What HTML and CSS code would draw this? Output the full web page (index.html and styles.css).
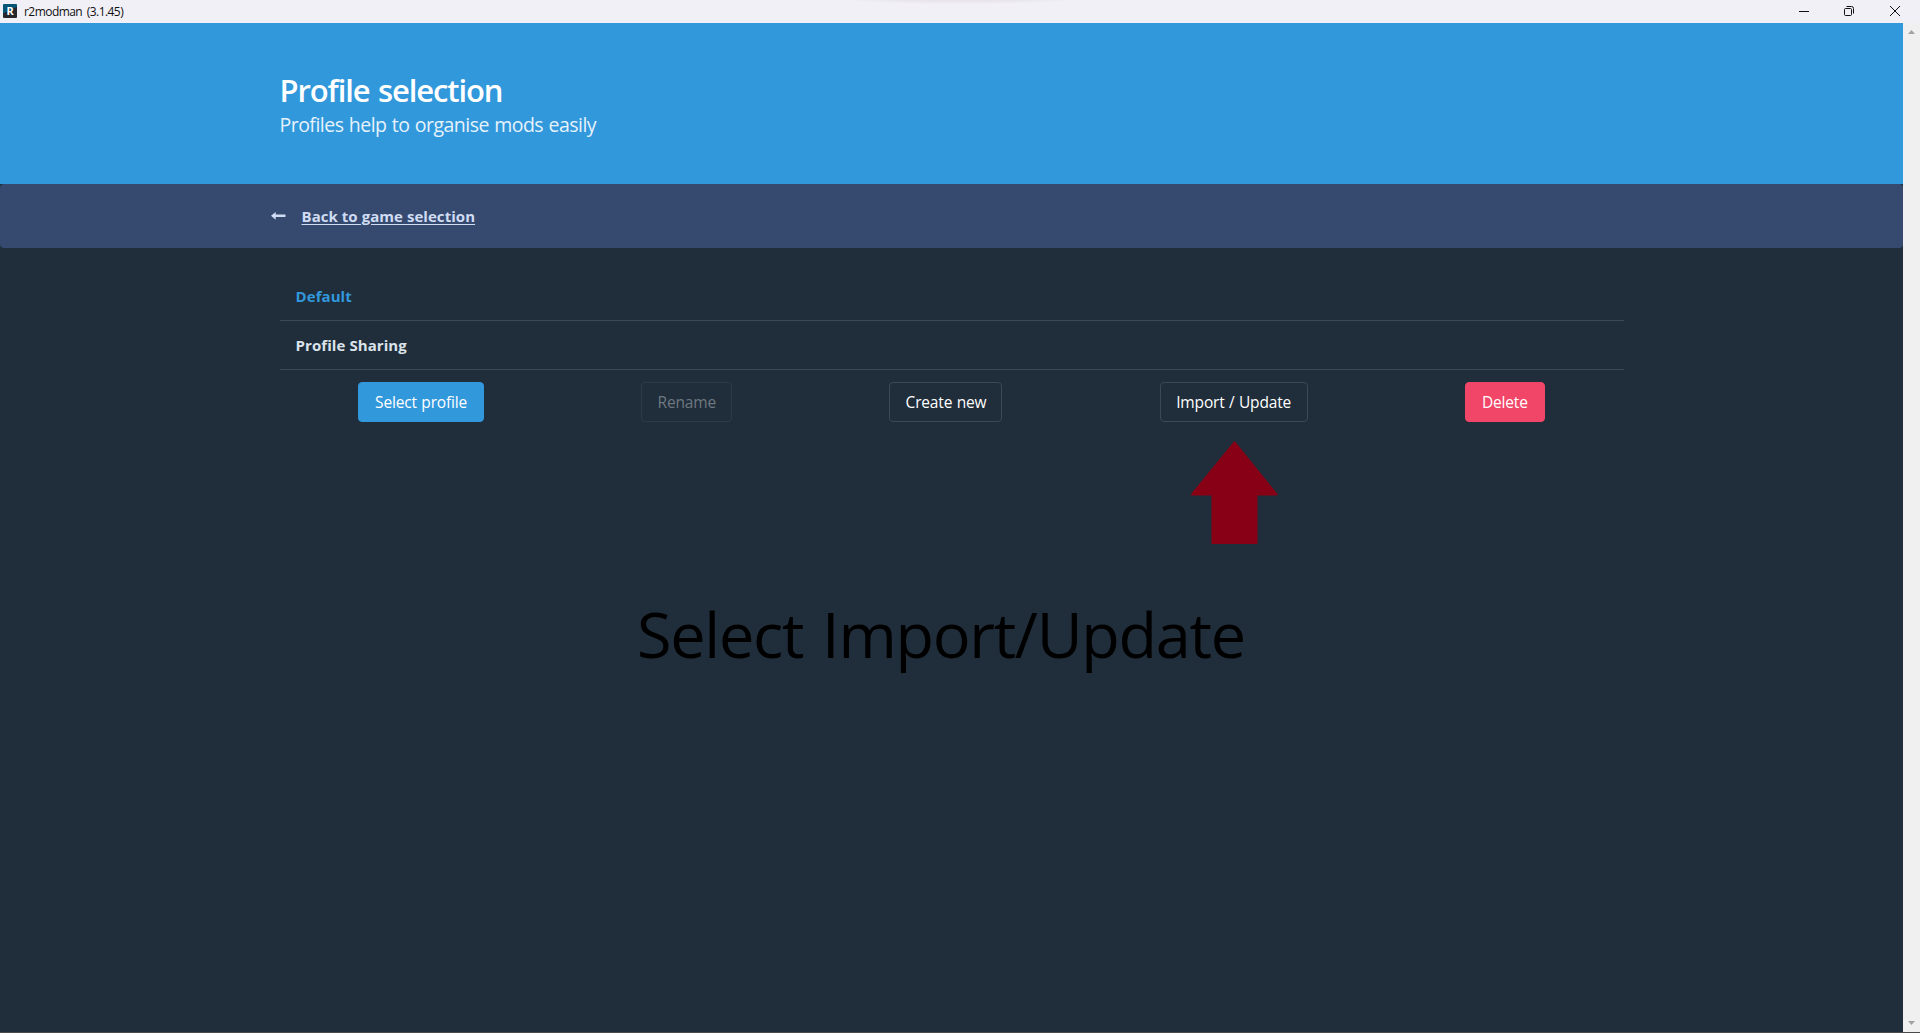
FILE: index.html
```html
<!DOCTYPE html>
<html lang="en">
<head>
<meta charset="utf-8">
<title>r2modman (3.1.45)</title>
<link rel="stylesheet" href="styles.css">
</head>
<body>
<header class="titlebar">
  <span class="app-icon">R</span>
  <span class="app-title">r2modman (3.1.45)</span>
  <div class="window-controls">
    <svg width="10" height="10" viewBox="0 0 10 10"><path d="M0 5.5h10"/></svg>
    <svg width="10" height="10" viewBox="0 0 10 10"><rect x=".5" y="2.5" width="7" height="7" rx="1"/><path d="M2.5.5H7.500a2 2 0 0 1 2 2V7.500"/></svg>
    <svg width="10" height="10" viewBox="0 0 10 10"><path d="M0 0l10 10M10 0L0 10"/></svg>
  </div>
</header>
<div class="viewport">
  <main class="page">
    <section class="hero">
      <h1 class="title">Profile selection</h1>
      <h2 class="subtitle">Profiles help to organise mods easily</h2>
    </section>
    <nav class="notice">
      <svg class="back-arrow" width="15" height="8" viewBox="0 0 15 8"><path d="M0 3.800L4.700 0V2.500H14a.5.5 0 0 1 .5.5v1.500a.5.5 0 0 1-.5.5H4.700v2.700z"/></svg>
      <a class="back-link">Back to game selection</a>
    </nav>
    <section class="profiles">
      <div class="profile selected">Default</div>
      <div class="profile">Profile Sharing</div>
      <div class="actions">
        <button class="button info w-select">Select profile</button>
        <button class="button w-rename" disabled>Rename</button>
        <button class="button w-create">Create new</button>
        <button class="button w-import">Import / Update</button>
        <button class="button danger w-delete">Delete</button>
      </div>
    </section>
    <svg class="pointer" width="90" height="106" viewBox="0 0 90 106"><path d="M44.500 1.500L86.500 53.500H66.500V102H22.500V53.500H2z"/></svg>
    <p class="caption">Select Import/Update</p>
  </main>
  <div class="scrollbar">
    <svg width="7" height="4" viewBox="0 0 7 4"><path d="M0 4L3.500 0 7 4z"/></svg>
    <svg width="7" height="4" viewBox="0 0 7 4"><path d="M0 0h7L3.500 4z"/></svg>
  </div>
</div>
</body>
</html>
```
FILE: styles.css
```css
* { box-sizing: border-box; }
body {
  margin: 0;
  height: 1033px;
  display: flex;
  flex-direction: column;
  overflow: hidden;
  background: #202d3a;
  border-bottom: 1px solid #4b4a4e;
  font-family: "Open Sans", "Noto Sans", sans-serif;
  font-size: 16px;
}
.titlebar {
  flex: none;
  height: 23px;
  display: flex;
  align-items: center;
  padding: 0 20px 2px 3px;
  background: radial-gradient(ellipse 118px 4px at 960px 0, #e6e4e9 0, #eae8ed 55%, #f2f0f7 100%) #f2f0f7;
}
.app-icon {
  width: 14px;
  height: 14px;
  border-radius: 1px;
  background: linear-gradient(155deg, #075475 45%, #26282d 46%);
  color: #fff;
  font: bold 11px/14px "Noto Sans", sans-serif;
  text-align: center;
}
.app-title { margin-left: 7px; padding-top: 2px; font-size: 12px; letter-spacing: -0.55px; word-spacing: 2px; color: #111; }
.window-controls { margin-left: auto; display: flex; gap: 36px; }
.window-controls svg { fill: none; stroke: #111; overflow: visible; }
.window-controls svg:first-child { margin-right: -1px; }
.viewport { flex: 1; display: flex; min-height: 0; }
.page { flex: 1; position: relative; }
.scrollbar {
  width: 17px;
  display: flex;
  flex-direction: column;
  justify-content: space-between;
  align-items: center;
  padding: 7px 0;
  background: #f0f0f0;
}
.scrollbar svg { fill: #a3a3a3; }
.hero { height: 161px; padding: 47px 279.500px; background: #3298dc; color: #fff; }
.title { margin: 0; font-size: 31px; line-height: 40px; font-weight: 600; letter-spacing: -1.1px; word-spacing: 1.500px; }
.subtitle { margin: 1px 0 0; font-size: 19.500px; line-height: 28px; font-weight: 400; letter-spacing: -0.52px; word-spacing: 0.800px; color: #e6f2fb; }
.notice {
  height: 64px;
  display: flex;
  align-items: center;
  gap: 15.500px;
  padding: 0 271px;
  border-radius: 4px;
  background: #364a70;
  color: #cfdcf3;
}
.back-arrow { fill: currentColor; }
.back-link { font-size: 15px; font-weight: 700; text-decoration: underline; text-underline-offset: 2px; letter-spacing: 0.05px; }
.profiles { padding: 24px 279.500px 0; }
.profile {
  height: 49px;
  display: flex;
  align-items: center;
  padding: 0 16px;
  border-bottom: 1px solid #3b4855;
  color: #dbe3ea;
  font-size: 15px;
  font-weight: 700;
  letter-spacing: 0.08px;
}
.profile.selected { color: #3298dc; }
.actions { display: flex; justify-content: space-around; padding-top: 12px; }
.button {
  height: 40px;
  padding: 0;
  border: 1px solid #3b4855;
  border-radius: 4px;
  background: transparent;
  color: #fff;
  font: 400 15.500px "Open Sans", "Noto Sans", sans-serif;
  letter-spacing: -0.15px;
  word-spacing: 0.500px;
  white-space: nowrap;
}
.button:disabled { opacity: .5; color: #bac0c5; }
.info { background: #3298dc; border-color: #3298dc; }
.danger { background: #f14668; border-color: #f14668; }
.w-select { width: 126px; }
.w-rename { width: 91px; }
.w-create { width: 113px; }
.w-import { width: 148px; }
.w-delete { width: 80px; }
/* Annotations drawn over the page */
.pointer { position: absolute; left: 1189.500px; top: 418px; fill: #880015; stroke: #880015; stroke-width: 2; stroke-linejoin: round; }
.caption {
  position: absolute;
  left: 637px;
  top: 567px;
  margin: 0;
  font-size: 63px;
  line-height: 88px;
  font-weight: 400;
  letter-spacing: -1.3px;
  word-spacing: 4px;
  color: #000;
  white-space: nowrap;
}
```
